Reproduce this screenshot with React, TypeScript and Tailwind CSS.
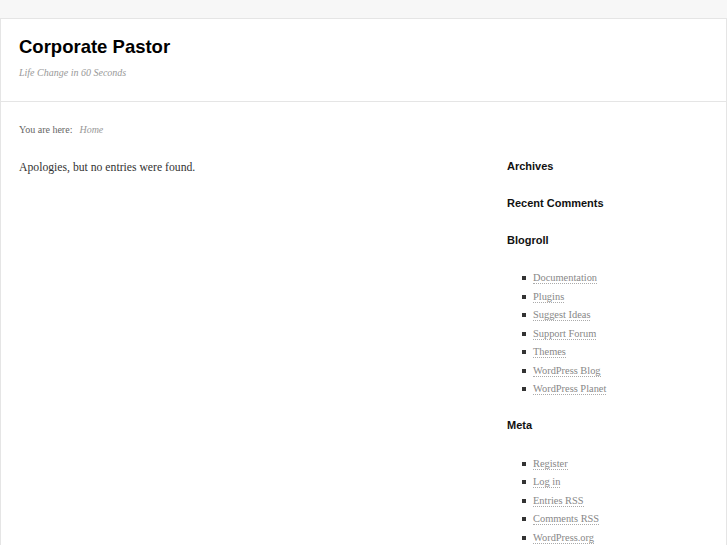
import React from 'react';

const blogroll = [
  'Documentation',
  'Plugins',
  'Suggest Ideas',
  'Support Forum',
  'Themes',
  'WordPress Blog',
  'WordPress Planet',
];

const serif = { fontFamily: '"Liberation Serif", "Times New Roman", serif' };

const LinkList = ({ items, top = 'mt-[22px]' }: { items: React.ReactNode[]; top?: string }) => (
  <ul className={`${top} pl-[15px] text-[10.4px] leading-[18.5px]`} style={serif}>
    {items.map((item, i) => (
      <li key={i} className="flex items-center">
        <span className="w-[4px] h-[4px] bg-[#333] mr-[7px] shrink-0"></span>
        <span className="text-[#888]">{item}</span>
      </li>
    ))}
  </ul>
);

const Dotted = ({ children }: { children: React.ReactNode }) => (
  <a href="#" className="border-b border-dotted border-[#aaa] leading-[12px]">{children}</a>
);

export default function App() {
  return (
    <div className="min-h-[545px] bg-[#f7f7f7] pt-[18px] font-['Liberation_Sans',Arial,sans-serif]">
      <div className="bg-white border border-[#e5e5e5] min-h-[527px]">
        <header className="h-[83px] border-b border-[#e5e5e5] px-[18px] pt-[16px]">
          <h1 className="text-[18.5px] font-bold text-black leading-[24px]">Corporate Pastor</h1>
          <p className="mt-[6px] text-[10px] italic text-[#999]" style={serif}>Life Change in 60 Seconds</p>
        </header>

        <div className="flex px-[18px]">
          <main className="flex-1" style={serif}>
            <p className="mt-[20px] text-[10px] text-[#666]">
              You are here:&nbsp; <em className="ml-[2px] text-[#999]">Home</em>
            </p>
            <p className="mt-[22px] text-[11.7px] text-[#333]">Apologies, but no entries were found.</p>
          </main>

          <aside className="w-[201px] pt-[57px] text-[#111]">
            <h3 className="text-[11px] font-bold leading-[14px]">Archives</h3>
            <h3 className="mt-[23px] text-[11px] font-bold leading-[14px]">Recent Comments</h3>
            <h3 className="mt-[23px] text-[11px] font-bold leading-[14px]">Blogroll</h3>
            <LinkList items={blogroll.map(b => <Dotted>{b}</Dotted>)} />
            <h3 className="mt-[19px] text-[11px] font-bold leading-[14px]">Meta</h3>
            <LinkList
              top="mt-[23px]"
              items={[
                <Dotted>Register</Dotted>,
                <Dotted>Log in</Dotted>,
                <Dotted>Entries RSS</Dotted>,
                <Dotted>Comments RSS</Dotted>,
                <Dotted>WordPress.org</Dotted>,
              ]}
            />
          </aside>
        </div>
      </div>
    </div>
  );
}
